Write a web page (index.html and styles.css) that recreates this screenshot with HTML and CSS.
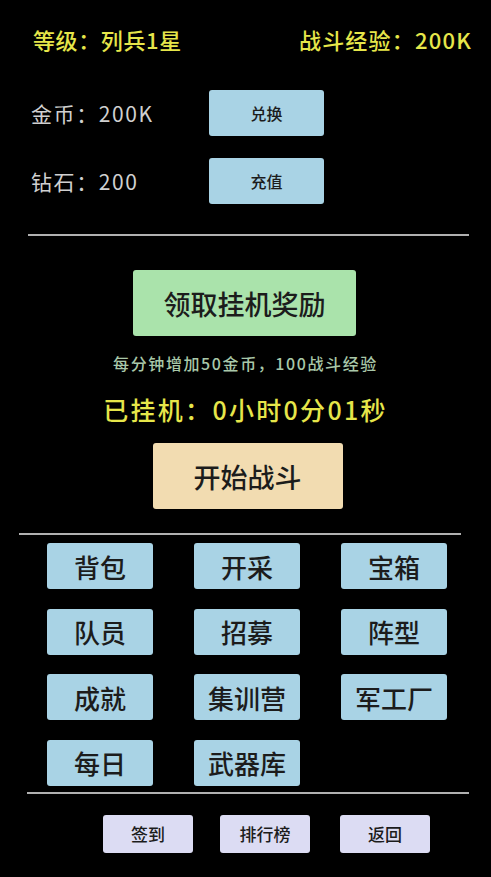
FILE: index.html
```html
<!DOCTYPE html>
<html lang="zh-CN">
<head>
<meta charset="utf-8">
<link rel="stylesheet" href="styles.css">
</head>
<body>
<div class="page">
  <div class="header">
    <span class="yellow">等级：列兵1星</span>
    <span class="yellow">战斗经验：200K</span>
  </div>
  <div class="res-row first">
    <span class="res-label">金币：200K</span>
    <button class="btn blue small">兑换</button>
  </div>
  <div class="res-row">
    <span class="res-label">钻石：200</span>
    <button class="btn blue small">充值</button>
  </div>
  <div class="rule rule1"></div>
  <div class="center">
    <button class="btn green big reward">领取挂机奖励</button>
  </div>
  <div class="hint">每分钟增加50金币，100战斗经验</div>
  <div class="idle">已挂机：0小时0分01秒</div>
  <div class="center">
    <button class="btn beige big fight">开始战斗</button>
  </div>
  <div class="rule rule2"></div>
  <div class="grid">
    <button class="btn blue cell">背包</button>
    <button class="btn blue cell">开采</button>
    <button class="btn blue cell">宝箱</button>
    <button class="btn blue cell">队员</button>
    <button class="btn blue cell">招募</button>
    <button class="btn blue cell">阵型</button>
    <button class="btn blue cell">成就</button>
    <button class="btn blue cell">集训营</button>
    <button class="btn blue cell">军工厂</button>
    <button class="btn blue cell">每日</button>
    <button class="btn blue cell">武器库</button>
  </div>
  <div class="rule rule3"></div>
  <div class="bottom">
    <button class="btn lav foot">签到</button>
    <button class="btn lav foot">排行榜</button>
    <button class="btn lav foot">返回</button>
  </div>
</div>
</body>
</html>
```
FILE: styles.css
```css
* { box-sizing: border-box; }
html, body {
  margin: 0;
  padding: 0;
  background: #000;
  font-family: "Noto Sans CJK SC", "Noto Sans", sans-serif;
  font-weight: 500;
}
.page {
  width: 491px;
  height: 877px;
  overflow: hidden;
  background: #000;
}
.header {
  display: flex;
  justify-content: space-between;
  padding: 23px 20px 0 33px;
  font-size: 22px;
  line-height: 32px;
  letter-spacing: 0.6px;
}
.header .yellow:last-child { letter-spacing: 1.2px; margin-right: -1px; }
.yellow { color: #e6e64a; }
.res-row {
  display: flex;
  align-items: center;
  padding-left: 31px;
  margin-top: 22px;
  height: 46px;
}
.res-row.first { margin-top: 35px; }
.res-label {
  color: #d0d0d0;
  font-size: 21px;
  font-weight: 400;
  letter-spacing: 1.6px;
  width: 178px;
}
.btn {
  border: none;
  border-radius: 3px;
  font-family: "Noto Sans CJK SC", "Noto Sans", sans-serif;
  font-weight: 500;
  color: #1c1c1c;
  padding: 0;
  display: flex;
  align-items: center;
  justify-content: center;
}
.blue { background: #a9d3e5; }
.green { background: #aae3ab; }
.beige { background: #f2dcb1; }
.lav { background: #dcdcf3; }
.small {
  width: 115px;
  height: 46px;
  font-size: 16px;
}
.rule {
  height: 2px;
  background: #b0b0b0;
}
.rule1 { margin: 30px 22px 0 28px; }
.center {
  display: flex;
  justify-content: center;
}
.reward {
  margin-top: 34px;
  width: 223px;
  height: 66px;
  font-size: 27px;
  margin-left: -2px;
}
.hint {
  text-align: center;
  color: #a9c8a9;
  font-size: 16px;
  letter-spacing: 1.6px;
  line-height: 20px;
  margin-top: 17px;
}
.idle {
  text-align: center;
  color: #e6e64a;
  font-size: 25px;
  letter-spacing: 2.3px;
  line-height: 32px;
  margin-top: 20px;
}
.fight {
  margin-top: 18px;
  width: 190px;
  height: 66px;
  font-size: 27px;
  margin-left: 4px;
}
.rule2 { margin: 24px 30px 0 19px; }
.grid {
  display: grid;
  grid-template-columns: repeat(3, 106px);
  column-gap: 41px;
  row-gap: 19.5px;
  padding-left: 47px;
  margin-top: 8px;
}
.cell {
  height: 46px;
  font-size: 26px;
}
.rule3 { margin: 6px 22px 0 27px; }
.bottom {
  display: flex;
  padding-left: 103px;
  margin-top: 21px;
}
.foot {
  width: 90px;
  height: 38px;
  font-size: 17px;
  margin-right: 27px;
}
.foot:nth-child(2) { margin-right: 30px; }
```
